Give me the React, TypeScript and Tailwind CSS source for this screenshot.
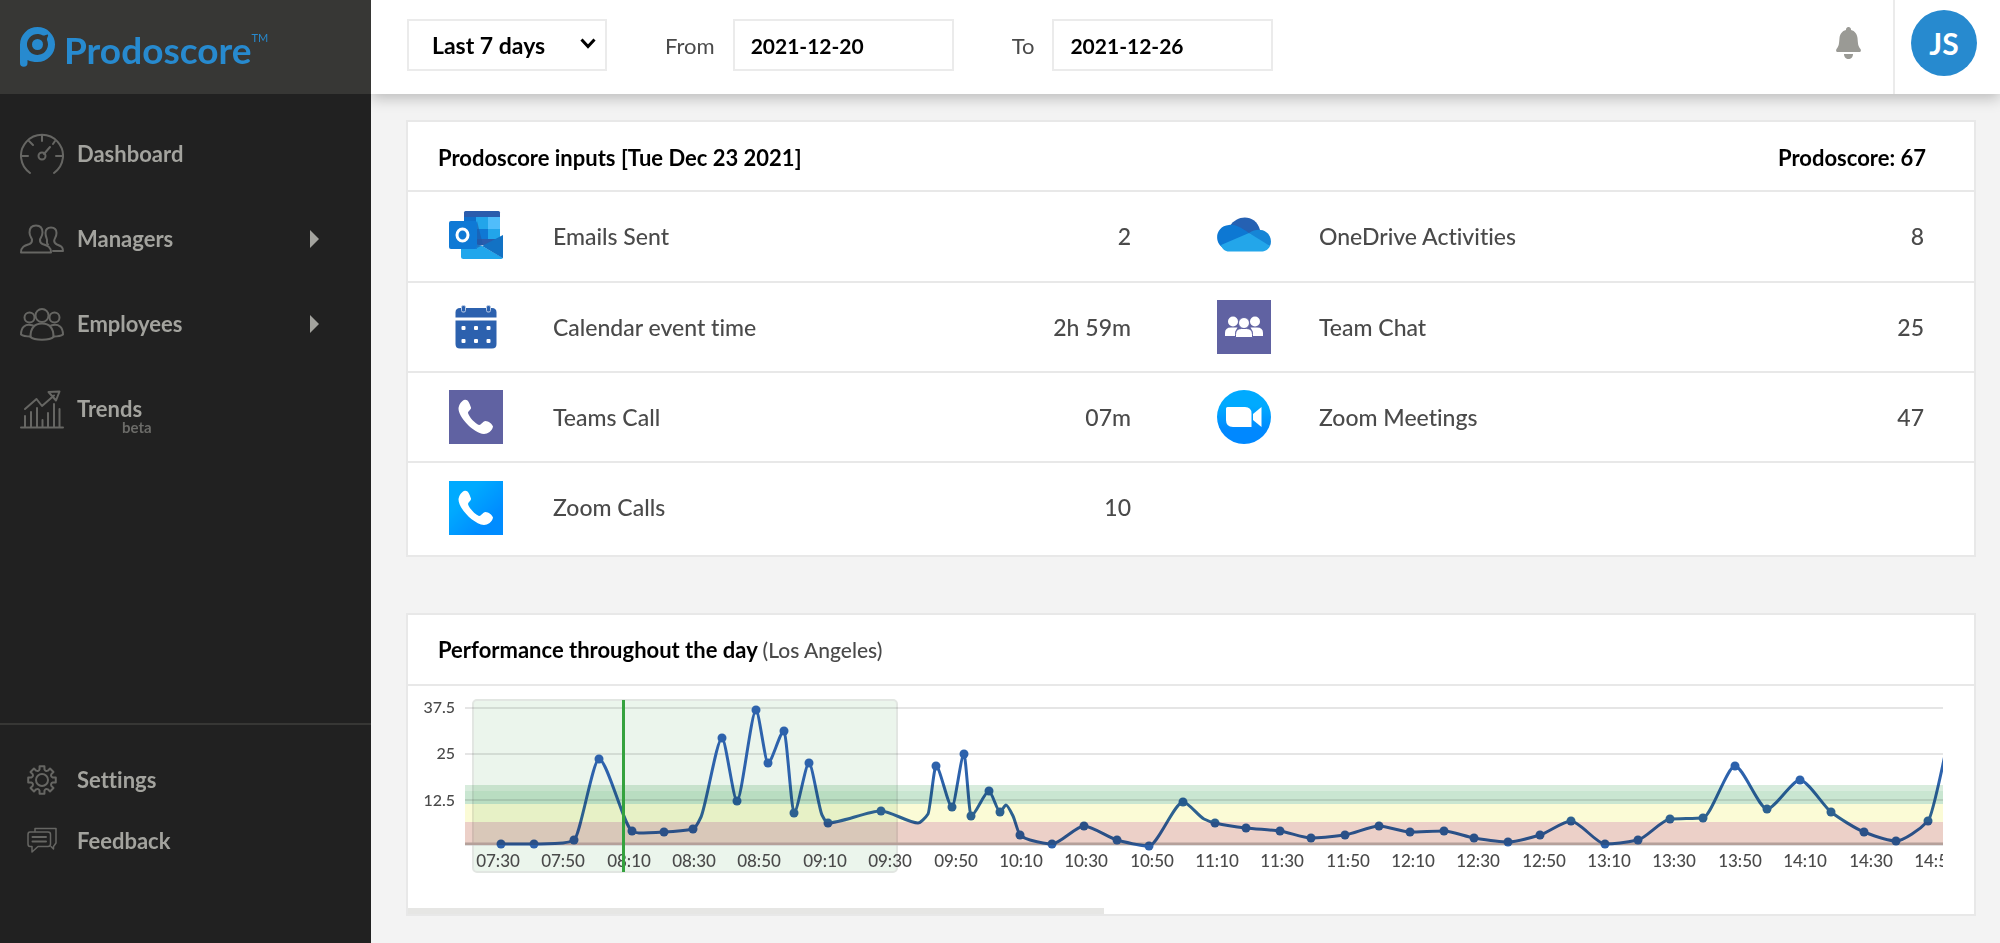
import { useState, type ReactNode } from 'react'

type Point = [number, number]

// Reading points of the day, in plot pixels
const DOTS: Point[] = [
  [36, 158], [69, 158], [109, 154], [134, 73], [167, 145], [199, 146], [228, 143],
  [257, 52], [272, 115], [291, 24], [303, 77], [319, 45], [329, 127], [344, 77],
  [363, 137], [416, 125], [471, 80], [487, 121], [499, 68], [506, 130], [524, 105],
  [535, 126], [555, 149], [587, 158], [619, 140], [652, 154], [684, 160], [718, 116],
  [750, 137], [781, 142], [815, 145], [846, 152], [880, 149], [914, 140], [945, 146],
  [979, 145], [1009, 152], [1043, 156], [1075, 149], [1106, 135], [1140, 158],
  [1173, 154], [1205, 133], [1238, 132], [1270, 80], [1302, 123], [1335, 94],
  [1366, 126], [1399, 146], [1431, 155], [1463, 135],
]

// These only bend the line and get no dot
const GUIDES: Point[] = [
  [98, 157], [174, 147], [236, 131], [357, 129], [453, 137], [463, 128], [541, 119],
  [548, 130], [565, 154], [739, 133], [1495, 18],
]

const TIMES = [
  '07:30', '07:50', '08:10', '08:30', '08:50', '09:10', '09:30', '09:50',
  '10:10', '10:30', '10:50', '11:10', '11:30', '11:50', '12:10', '12:30',
  '12:50', '13:10', '13:30', '13:50', '14:10', '14:30', '14:50',
]

// Monotone cubic through the points: flat at peaks, no overshoot in between
function smoothPath(points: Point[]) {
  const slope = points.map((p, i) => {
    const prev = points[i - 1]
    const next = points[i + 1]
    if (!prev || !next) return 0
    const a = (p[1] - prev[1]) / (p[0] - prev[0])
    const b = (next[1] - p[1]) / (next[0] - p[0])
    if (a * b <= 0) return 0
    return (2 * a * b) / (a + b)
  })
  let d = `M${points[0][0]} ${points[0][1]}`
  for (let i = 1; i < points.length; i++) {
    const [x0, y0] = points[i - 1]
    const [x1, y1] = points[i]
    const h = (x1 - x0) * 0.24
    d += `C${x0 + h} ${y0 + h * slope[i - 1]} ${x1 - h} ${y1 - h * slope[i]} ${x1} ${y1}`
  }
  return d
}

const LINE = smoothPath([...DOTS, ...GUIDES].sort((a, b) => a[0] - b[0]))

function gearPath(c: number, outer: number, inner: number) {
  const at = (r: number, deg: number) => {
    const t = (deg * Math.PI) / 180
    return `${(c + r * Math.cos(t)).toFixed(2)} ${(c + r * Math.sin(t)).toFixed(2)}`
  }
  let d = ''
  for (let i = 0; i < 8; i++) {
    const a = i * 45
    d += `${i ? 'L' : 'M'}${at(inner, a - 13)}L${at(outer, a - 10)}L${at(outer, a + 10)}L${at(inner, a + 13)}`
    d += `Q${at(inner - 2, a + 22.5)} ${at(inner, a + 32)}`
  }
  return d + 'Z'
}

/* ---------- sidebar icons ---------- */

function LineIcon({ children, w, h }: { children: ReactNode; w: number; h: number }) {
  return (
    <svg
      width={w}
      height={h}
      viewBox={`0 0 ${w} ${h}`}
      fill="none"
      stroke="#666663"
      strokeWidth="2"
      strokeLinecap="round"
      strokeLinejoin="round"
      aria-hidden="true"
    >
      {children}
    </svg>
  )
}

const gaugeIcon = (
  <LineIcon w={44} h={42}>
    <path d="M10 40A21 21 0 1 1 34 40" />
    <path d="M22 2V8M9 8L13 12M2 23H8M36 23H42M24 21L30 14M33 11L35 8" />
    <circle cx="22" cy="23" r="3.5" />
  </LineIcon>
)

const managersIcon = (
  <LineIcon w={44} h={30}>
    <path d="M16 1.5C11.500 1.500 9.500 4.500 9.500 8.500C9.500 12 11.500 13.500 12 15.500C12.300 18 11.500 19 9.500 20C5 21.500 1 22.500 1 28.500H31C31 22.500 27 21.500 22.500 20C20.500 19 19.700 18 20 15.500C20.500 13.500 22.500 12 22.500 8.500C22.500 4.500 20.500 1.500 16 1.500Z" />
    <path d="M27 17C27.500 15 25.500 13.500 25.500 9C25.500 5.500 27.500 3.500 31 3.500C34.500 3.500 36.500 5.500 36.500 9C36.500 13 34.500 14 34.200 16.500C34 19 35 19.500 37 20.500C41 22 43 23 43 27H33" />
    <path d="M27 17C27 19 26.500 19.500 28 20.500" />
  </LineIcon>
)

const employeesIcon = (
  <LineIcon w={44} h={33}>
    <circle cx="22" cy="7.500" r="6.500" />
    <circle cx="9.500" cy="9.500" r="5" />
    <circle cx="34.500" cy="9.500" r="5" />
    <path d="M10.500 29C10.500 19 15.500 15.500 22 15.500S33.500 19 33.500 29C30 32.500 14 32.500 10.500 29Z" />
    <path d="M13 17.500C5 15 1 19.500 1 26.500C3 28 7 28.500 10.500 28.500M31 17.500C39 15 43 19.500 43 26.500C41 28 37 28.500 33.500 28.500" />
  </LineIcon>
)

const trendsIcon = (
  <LineIcon w={44} h={39}>
    <path d="M1 37.500H43M5 26V37M11 22V37M17 18V37M22.500 30V37M28 23V37M34 14V37M39.500 19V37" />
    <path d="M5 19L16.500 9L22 16L34 5.500M28.500 2L39.500 1.500L36 10.500Z" />
  </LineIcon>
)

const settingsIcon = (
  <LineIcon w={30} h={30}>
    <path d={gearPath(15, 14, 11)} />
    <circle cx="15" cy="15" r="6" />
  </LineIcon>
)

const feedbackIcon = (
  <LineIcon w={30} h={27}>
    <path d="M8 4.500V1.500H29V16L26.500 19.500V22L24 19.500" strokeWidth="1.500" />
    <path d="M3 5H21C22.500 5 23.500 6 23.500 7.500V17C23.500 18.500 22.500 19.500 21 19.500H11L5 25V19.500H3C1.500 19.500 1 18.500 1 17V7.500C1 6 1.500 5 3 5Z" strokeWidth="1.500" />
    <path d="M5.500 10H19M5.500 14.500H19" />
  </LineIcon>
)

/* ---------- product icons ---------- */

const HANDSET =
  'M16 9.800C19 9.500 20.500 13 22 17.500C22.500 19.500 19 21 19 23C20 27 26 33.500 30 35C32 35.300 33.500 31.500 36.500 31C39.500 31.300 43 33.500 44 36.500C43.500 41 38.500 44 35 44C24 43 9.500 27 9.500 18.500C9.800 14.500 13 10.200 16 9.800Z'

const outlookIcon = (
  <svg width="54" height="48" viewBox="0 0 54 48" className="mb-1" aria-hidden="true">
    <path d="M16.500 0H49.500Q51 0 51 1.500V34H15V1.500Q15 0 16.500 0Z" fill="#2a5cad" />
    <path d="M15 6H27V34H15Z" fill="#0f6fcb" />
    <path d="M27 6H39V18H27Z" fill="#22a5ea" />
    <path d="M39 6H51V18H39Z" fill="#50bdfb" />
    <path d="M27 18H39V28H27Z" fill="#0f78d4" />
    <path d="M39 18H51V28H39Z" fill="#22a5ea" />
    <path d="M12 28L33 35L54 47Q53 48 52 48H14.500Q12 48 12 45.500Z" fill="#20a6ec" />
    <path d="M33 35L54 24V46.500Q54 47 53.500 47Z" fill="#1272c4" />
    <path d="M15 38H28V10L34 34L26 38Z" fill="#1e58a8" opacity=".6" />
    <rect y="10" width="28" height="28" rx="2" fill="#0f79d5" />
    <ellipse cx="13.500" cy="24" rx="5.500" ry="6" fill="none" stroke="#fff" strokeWidth="3" />
  </svg>
)

const oneDriveIcon = (
  <svg width="54" height="35" viewBox="0 0 54 35" className="mb-1" aria-hidden="true">
    <path d="M13 9C20-3 39-3 43 13L30 18Z" fill="#2561b3" />
    <path d="M12 8C18 7 23 10 32 16L8 32C-4 27-2 9 12 8Z" fill="#0d78d3" />
    <path d="M32 16C38 12 45 12 49 15C54 18 55 25 53 29L44 27Z" fill="#1685d6" />
    <path d="M4 28L32 16L53 29C51 33 48 34.500 44 34.500H12C8 34.500 5 32 4 28Z" fill="#23a6ea" />
  </svg>
)

const calendarIcon = (
  <svg width="54" height="44" viewBox="0 0 54 44" aria-hidden="true">
    <path d="M11 3H43Q47.500 3 47.500 7.500V12.500H6.500V7.500Q6.500 3 11 3Z" fill="#2c61ae" />
    <path d="M6.500 15.500H47.500V39Q47.500 43.500 43 43.500H11Q6.500 43.500 6.500 39Z" fill="#2c61ae" />
    <g fill="#2c61ae" stroke="#b9cbe6">
      <rect x="12.500" y=".5" width="4" height="6.500" rx="1.500" />
      <rect x="37.500" y=".5" width="4" height="6.500" rx="1.500" />
    </g>
    <g fill="#fff">
      <rect x="12.500" y="21" width="4" height="4" rx="1" />
      <rect x="25" y="21" width="4" height="4" rx="1" />
      <rect x="37.500" y="21" width="4" height="4" rx="1" />
      <rect x="12.500" y="34" width="4" height="4" rx="1" />
      <rect x="25" y="34" width="4" height="4" rx="1" />
      <rect x="37.500" y="34" width="4" height="4" rx="1" />
    </g>
  </svg>
)

const teamChatIcon = (
  <svg width="54" height="54" viewBox="0 0 54 54" aria-hidden="true">
    <rect width="54" height="54" fill="#6062a2" />
    <g fill="#fff">
      <circle cx="16" cy="21.500" r="5" />
      <circle cx="38" cy="21.500" r="5" />
      <path d="M8 36V33Q8 27.500 14 27.500H20.500L18.500 31V36Z" />
      <path d="M46 36V33Q46 27.500 40 27.500H33.500L35.500 31V36Z" />
    </g>
    <g fill="#fff" stroke="#6062a2">
      <circle cx="27" cy="23" r="5.500" />
      <path d="M18.500 37.500V34.500Q18.500 28.500 24.500 28.500H29.500Q35.500 28.500 35.500 34.500V37.500Z" />
    </g>
  </svg>
)

const teamsCallIcon = (
  <svg width="54" height="54" viewBox="0 0 54 54" aria-hidden="true">
    <rect width="54" height="54" fill="#6062a2" />
    <path d={HANDSET} fill="#fff" />
  </svg>
)

const zoomMeetingsIcon = (
  <svg width="54" height="54" viewBox="0 0 54 54" aria-hidden="true">
    <linearGradient id="zoomRound" x1="0" y1="0" x2="0" y2="1">
      <stop offset=".3" stopColor="#00aaff" />
      <stop offset=".75" stopColor="#0088ff" />
    </linearGradient>
    <circle cx="27" cy="27" r="27" fill="url(#zoomRound)" />
    <path d="M10.500 17H28Q34.500 17 34.500 23.500V37H16Q9 37 9 30V18.500Q9 17 10.500 17Z" fill="#fff" />
    <path d="M36 24L44.500 17V37L36 30Z" fill="#fff" />
  </svg>
)

const zoomCallsIcon = (
  <svg width="54" height="54" viewBox="0 0 54 54" aria-hidden="true">
    <linearGradient id="zoomSquare" x1="0" y1="0" x2="1" y2="1">
      <stop offset=".3" stopColor="#00aaff" />
      <stop offset=".75" stopColor="#008cff" />
    </linearGradient>
    <rect width="54" height="54" fill="url(#zoomSquare)" />
    <path d={HANDSET} fill="#fff" />
  </svg>
)

interface Input {
  label: string
  value: string
  icon: ReactNode
}

const INPUT_ROWS: [Input, Input | null][] = [
  [
    { label: 'Emails Sent', value: '2', icon: outlookIcon },
    { label: 'OneDrive Activities', value: '8', icon: oneDriveIcon },
  ],
  [
    { label: 'Calendar event time', value: '2h 59m', icon: calendarIcon },
    { label: 'Team Chat', value: '25', icon: teamChatIcon },
  ],
  [
    { label: 'Teams Call', value: '07m', icon: teamsCallIcon },
    { label: 'Zoom Meetings', value: '47', icon: zoomMeetingsIcon },
  ],
  [{ label: 'Zoom Calls', value: '10', icon: zoomCallsIcon }, null],
]

/* ---------- layout parts ---------- */

function Logo() {
  return (
    <a href="#" className="flex h-[94px] items-center bg-[#373735] pl-5 text-[#278acf]">
      <svg width="36" height="40" viewBox="0 0 36 40" className="mr-2 shrink-0" aria-hidden="true">
        <path
          fillRule="evenodd"
          d="M17.500 0A17.500 17.500 0 1 1 17.500 35C13.500 35 10.500 34.500 7.500 33V36A3.700 3.700 0 0 1 0 36V17.500A17.500 17.500 0 0 1 17.500 0ZM28 7.500C26 7.500 24.500 9 23 8.500A10.500 10.500 0 1 0 27 13C26.500 11 28.500 9.500 28 7.500Z"
          fill="currentColor"
        />
        <circle cx="17.500" cy="17.500" r="5.500" fill="currentColor" />
      </svg>
      <span className="pt-1 text-[37px] leading-none font-bold">Prodoscore</span>
      <span className="mb-5 text-[11px] leading-none">TM</span>
    </a>
  )
}

function NavItem({ label, icon, arrow, note }: { label: string; icon: ReactNode; arrow?: boolean; note?: string }) {
  return (
    <a href="#" className="flex h-[84px] items-center pr-[52px] pl-5">
      <span className="flex w-[44px] shrink-0 justify-center">{icon}</span>
      <span className="relative ml-[13px] flex-1 leading-none">
        {label}
        {note && (
          <span className="absolute top-[22px] left-[45px] text-[15px] leading-none text-[#6b6b68]">{note}</span>
        )}
      </span>
      {arrow && (
        <svg width="9" height="18" viewBox="0 0 9 18" fill="#a3a39e" aria-hidden="true">
          <path d="M0 0L9 9L0 18Z" />
        </svg>
      )}
    </a>
  )
}

function Sidebar() {
  return (
    <aside className="z-20 flex w-[371px] shrink-0 flex-col bg-[#212121] text-[22px] font-bold text-[#a3a39e]">
      <div className="font-normal">
        <Logo />
      </div>
      <nav className="flex flex-1 flex-col gap-px pt-[18px]">
        <NavItem label="Dashboard" icon={gaugeIcon} />
        <NavItem label="Managers" icon={managersIcon} arrow />
        <NavItem label="Employees" icon={employeesIcon} arrow />
        <NavItem label="Trends" icon={trendsIcon} note="beta" />
      </nav>
      <nav className="flex h-[220px] flex-col border-t-2 border-[#373735] pt-6 leading-none">
        <a href="#" className="flex h-[61px] items-center gap-5 pl-[27px]">
          {settingsIcon}
          Settings
        </a>
        <a href="#" className="flex h-[61px] items-center gap-5 pl-[27px]">
          {feedbackIcon}
          Feedback
        </a>
      </nav>
    </aside>
  )
}

function DateField({ id, label, value, onChange }: { id: string; label: string; value: string; onChange: (v: string) => void }) {
  return (
    <div className="flex items-center gap-[18px]">
      <label htmlFor={id} className="text-[22px] text-[#4a4a4a]">
        {label}
      </label>
      <input
        id={id}
        type="text"
        value={value}
        onChange={(e) => onChange(e.target.value)}
        className="h-[52px] w-[221px] border-2 border-[#ebebeb] bg-white px-4 text-[21px] font-bold text-black"
      />
    </div>
  )
}

function Header() {
  const [from, setFrom] = useState('2021-12-20')
  const [to, setTo] = useState('2021-12-26')

  return (
    <header className="z-10 flex h-[94px] items-stretch bg-white shadow-[0_4px_14px_rgba(0,0,0,0.24)]">
      <div className="flex flex-1 items-center pb-1 pl-9">
        <div className="relative">
          <select
            aria-label="Period"
            defaultValue="7"
            className="h-[52px] w-[200px] appearance-none border-2 border-[#ebebeb] bg-white pl-[23px] text-[23px] font-bold text-black"
          >
            <option value="7">Last 7 days</option>
            <option value="14">Last 14 days</option>
            <option value="30">Last 30 days</option>
          </select>
          <svg
            width="16"
            height="11"
            viewBox="0 0 16 11"
            fill="none"
            stroke="#000"
            strokeWidth="3"
            className="pointer-events-none absolute top-[19px] right-[11px]"
            aria-hidden="true"
          >
            <path d="M1.500 1.500L8 8.500L14.500 1.500" />
          </svg>
        </div>
        <div className="ml-[58px] flex gap-[58px]">
          <DateField id="from" label="From" value={from} onChange={setFrom} />
          <DateField id="to" label="To" value={to} onChange={setTo} />
        </div>
      </div>
      <button type="button" aria-label="Notifications" className="mr-8 pb-2">
        <svg width="25" height="32" viewBox="0 0 25 32" fill="#9a9a95" aria-hidden="true">
          <path d="M12.500 0A2.500 2.500 0 0 1 15 3C19 4 21 7 21.500 11C22 17 22 19 24.500 22C25.500 24 24.500 25 23 25H2C.5 25-.5 24 .5 22C3 19 3 17 3.500 11C4 7 6 4 10 3A2.500 2.500 0 0 1 12.500 0Z" />
          <path d="M8 27H17C17 30 15 32 12.500 32S8 30 8 27Z" />
        </svg>
      </button>
      <div className="flex w-[107px] items-center border-l-2 border-[#ebebeb] pb-2 pl-4">
        <button
          type="button"
          className="flex size-[66px] items-center justify-center rounded-full bg-[#278acf] text-[30px] font-bold text-white"
        >
          JS
        </button>
      </div>
    </header>
  )
}

function InputsCard() {
  return (
    <section className="border-2 border-[#e8e8e8] bg-white">
      <div className="flex h-[70px] items-center justify-between border-b-2 border-[#e8e8e8] pt-0.5 pr-12 pl-[30px] text-[22px] font-bold text-black">
        <h2>Prodoscore inputs [Tue Dec 23 2021]</h2>
        <p>Prodoscore: 67</p>
      </div>
      <table className="mb-[3px] w-full table-fixed text-[23px] text-[#4a4a4a]">
        <colgroup>
          <col className="w-[145px]" />
          <col />
          <col className="w-[153px]" />
          <col className="w-[188px]" />
          <col />
          <col className="w-[230px]" />
        </colgroup>
        <tbody>
          {INPUT_ROWS.map(([left, right]) => (
            <tr key={left.label} className="h-[90px] border-b-2 border-[#e8e8e8] last:border-b-0">
              <td className="pl-[41px]">{left.icon}</td>
              <th scope="row" className="text-left font-medium">{left.label}</th>
              <td className="text-right font-medium">{left.value}</td>
              <td className="pl-[86px]">{right?.icon}</td>
              <th scope="row" className="text-left font-medium">{right?.label}</th>
              <td className="pr-[50px] text-right font-medium">{right?.value}</td>
            </tr>
          ))}
        </tbody>
      </table>
    </section>
  )
}

function PerformanceCard() {
  return (
    <section className="border-2 border-[#e8e8e8] bg-white">
      <div className="flex h-[71px] items-center border-b-2 border-[#e8e8e8] pl-[30px]">
        <h2 className="text-[22px] font-bold text-black">
          Performance throughout the day{' '}
          <span className="text-[21px] font-medium text-[#4a4a4a]">(Los Angeles)</span>
        </h2>
      </div>
      <div className="flex h-[222px] pr-[31px]">
        <svg width="57" height="200" className="shrink-0 text-[16px] font-medium" fill="#4a4a4a" textAnchor="end">
          <text x="47" y="27">37.5</text>
          <text x="47" y="73">25</text>
          <text x="47" y="120">12.5</text>
        </svg>
        <div className="min-w-0 flex-1 overflow-hidden">
          <svg width="3340" height="200" className="max-w-none text-[17px] font-medium" role="img" aria-label="Performance by time of day">
            <rect x="8" y="14" width="424" height="172" rx="4" fill="#ebf5ec" stroke="#e2e6e2" strokeWidth="2" />
            <path d="M0 22H3340M0 68H3340M0 114H3340" stroke="#000" strokeOpacity=".1" strokeWidth="2" />
            <path d="M0 158H3340" stroke="#c4c4c4" strokeWidth="3" />
            <path d={LINE} fill="none" stroke="#2d62ac" strokeWidth="3" />
            {DOTS.map(([x, y]) => (
              <circle key={x} cx={x} cy={y} r="4.500" fill="#2d62ac" />
            ))}
            <g className="mix-blend-multiply">
              <rect y="99" width="3340" height="6" fill="#d8ecdd" />
              <rect y="105" width="3340" height="13" fill="#c9e6d1" />
              <rect y="118" width="3340" height="18" fill="#fbfbd6" />
              <rect y="136" width="3340" height="23" fill="#ecd0c8" />
            </g>
            <g fill="#4a4a4a" textAnchor="middle">
              {TIMES.map((time, i) => (
                <text key={time} x={33 + Math.round(i * 65.36)} y="181">
                  {time}
                </text>
              ))}
            </g>
            <path d="M158.500 14V186" stroke="#35a23e" strokeWidth="3" />
          </svg>
        </div>
      </div>
      {/* scroll thumb */}
      <div className="h-[6px] w-4/9 bg-[#e6e6e4]" />
    </section>
  )
}

export default function App() {
  return (
    <div className="flex min-h-screen bg-[#f3f3f3] font-[Lato,'Liberation_Sans',sans-serif] [font-variant-ligatures:none]">
      <Sidebar />
      <div className="flex min-w-0 flex-1 flex-col">
        <Header />
        <main className="flex flex-col gap-14 pt-[26px] pr-6 pb-6 pl-[35px]">
          <InputsCard />
          <PerformanceCard />
        </main>
      </div>
    </div>
  )
}
